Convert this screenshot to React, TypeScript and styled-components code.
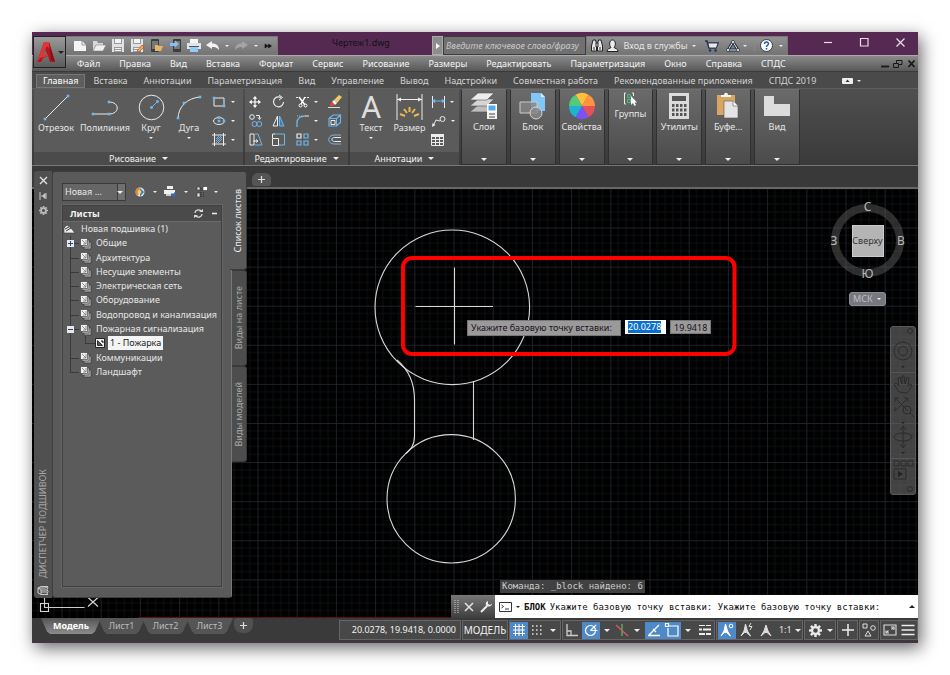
import React from 'react';
import styled, { createGlobalStyle, css } from 'styled-components';

const GlobalStyle = createGlobalStyle`
  * { box-sizing: border-box; }
  body {
    margin: 0;
    background: #fff;
    color: #e6e6e6;
    font-family: "Noto Sans", "Open Sans", sans-serif;
    font-size: 9px;
    line-height: 12px;
  }
  button, input, select {
    font: inherit;
    color: inherit;
    margin: 0;
    padding: 0;
    border: 0;
    background: none;
  }
`;

const Desktop = styled.div`
  min-height: 100vh;
  padding: 32px;
  display: flex;
`;

const Window = styled.main`
  flex: 1;
  min-width: 0;
  display: flex;
  flex-direction: column;
  background: #562953;
  box-shadow: 3px 5px 16px rgba(0, 0, 0, 0.6);
`;

/* ---------- shared parts ---------- */

const Icon = styled.svg<{ $w: number; $h: number }>`
  display: block;
  flex: none;
  width: ${(p) => p.$w}px;
  height: ${(p) => p.$h}px;
  overflow: visible;
  fill: none;
`;

const Caret = styled.span<{ $size?: number; $dark?: boolean; $up?: boolean }>`
  flex: none;
  width: 0;
  height: 0;
  border: ${(p) => p.$size ?? 2}px solid transparent;
  ${(p) =>
    p.$up
      ? css`
          border-top-width: 0;
          border-bottom-color: ${p.$dark ? '#222' : '#eee'};
        `
      : css`
          border-bottom-width: 0;
          border-top-color: ${p.$dark ? '#222' : '#eee'};
        `}
`;

const IconButton = styled.button<{ $w: number }>`
  flex: none;
  width: ${(p) => p.$w}px;
  height: 100%;
  display: flex;
  align-items: center;
  justify-content: center;
`;

/* ---------- title bar ---------- */

const Header = styled.header`
  position: relative;
`;

const TitleBar = styled.div`
  height: 23px;
  padding: 4px 0 0 34px;
  display: flex;
`;

const AppButton = styled.button`
  position: absolute;
  left: 1px;
  top: 4px;
  width: 33px;
  height: 32px;
  display: flex;
  align-items: center;
  justify-content: center;
  gap: 2px;
  border: 1px solid #222;
  background: linear-gradient(#9a9a9a, #5c5c5c);
  z-index: 1;
`;

const QuickBar = styled.div`
  width: 212px;
  padding-left: 4px;
  display: flex;
  border: 1px solid #777;
  border-left: 0;
  background: linear-gradient(#929292, #747474);
`;

const FileTitle = styled.h1`
  flex: 1;
  margin: 0;
  padding: 0 0 5px 12px;
  display: flex;
  align-items: center;
  justify-content: center;
  color: #111;
  font-size: 9px;
  font-weight: 400;
`;

const SearchToggle = styled.button`
  width: 11px;
  display: flex;
  align-items: center;
  justify-content: center;
  background: #8d8d8d;
  border: 1px solid #aaa;
`;

const SearchInput = styled.input`
  width: 143px;
  padding: 0 2px;
  border: 1px solid #3c3c3c;
  background: #707070;
  font-style: italic;
  &::placeholder { color: #c8c8c8; opacity: 1; }
`;

const InfoBar = styled.div`
  width: 202px;
  padding-left: 1px;
  display: flex;
  border: 1px solid #777;
  background: linear-gradient(#929292, #747474);
`;

const SignIn = styled.button`
  width: 90px;
  display: flex;
  align-items: center;
  justify-content: space-between;
  white-space: nowrap;
`;

const VRule = styled.span`
  width: 1px;
  margin: 3px 2px;
  background: #888;
`;

const WindowButtons = styled.div`
  width: 130px;
  height: 13px;
  padding-left: 22px;
  display: flex;
`;

const MenuBar = styled.nav`
  height: 17px;
  padding: 0 0 0 45px;
  display: flex;
  align-items: center;
  border-top: 1px solid #aaa;
  border-bottom: 1px solid #3a3a3a;
  background: linear-gradient(#8a8a8a, #585858);
`;

const MenuList = styled.div`
  flex: 1;
  display: flex;
  gap: 19px;
`;

const MenuItem = styled.button`
  color: #f4f4f4;
  white-space: nowrap;
`;

/* ---------- ribbon ---------- */

const RibbonTabs = styled.nav`
  height: 16px;
  padding: 2px 0 0 4px;
  display: flex;
  align-items: stretch;
  background: #4a4a4a;
`;

const RibbonTab = styled.button<{ $active?: boolean }>`
  padding: 0 8px;
  color: ${(p) => (p.$active ? '#fff' : '#d2d2d2')};
  white-space: nowrap;
  ${(p) =>
    p.$active &&
    css`
      background: #5e5e5e;
      box-shadow: inset 0 0 0 1px #777;
      padding: 0 7px;
    `}
`;

const RibbonToggle = styled.button`
  padding-left: 18px;
  display: flex;
  align-items: center;
  gap: 4px;
`;

const Ribbon = styled.section`
  height: 78px;
  display: flex;
  gap: 2px;
  padding: 0 2px;
  border-top: 1px solid #5f5f5f;
  border-bottom: 1px solid #777;
  background: linear-gradient(#4f4f4f, #3a3a3a);
`;

const Panel = styled.div<{ $w: number }>`
  width: ${(p) => p.$w}px;
  display: flex;
  flex-direction: column;
  background: #5b5b5b;
`;

const PanelBody = styled.div`
  flex: 1;
  display: flex;
`;

const PanelTitle = styled.button`
  height: 14px;
  display: flex;
  align-items: center;
  justify-content: center;
  gap: 6px;
  background: #4b4b4b;
  color: #f0f0f0;
`;

const BigTool = styled.button<{ $w: number }>`
  width: ${(p) => p.$w}px;
  padding-top: 4px;
  display: flex;
  flex-direction: column;
  align-items: center;
  white-space: nowrap;
`;

const BigIcon = styled.span`
  height: 29px;
  display: flex;
  align-items: center;
`;

const ToolLabel = styled.span`
  height: 15px;
`;

const ToolColumn = styled.div<{ $w: number }>`
  width: ${(p) => p.$w}px;
  padding: 3px 0;
  display: flex;
  flex-direction: column;
`;

const SmallTool = styled.button`
  height: 19px;
  display: flex;
  align-items: center;
  justify-content: center;
  gap: 5px;
`;

const DropPanels = styled.div`
  width: 339px;
  display: grid;
  grid-template-columns: repeat(7, 1fr);
  gap: 3px;
`;

const DropPanel = styled.button`
  padding: 3px 0 3px;
  display: flex;
  flex-direction: column;
  align-items: center;
  border: 1px solid #303030;
  border-top-color: #707070;
  background: linear-gradient(#6a6a6a, #4b4b4b);
  white-space: nowrap;
`;

const DropIcon = styled.span<{ $h: number }>`
  height: ${(p) => p.$h}px;
  display: flex;
  align-items: flex-start;
  justify-content: center;
`;

const DropLabel = styled.span`
  flex: 1;
`;

/* ---------- drawing area ---------- */

const Workspace = styled.section`
  position: relative;
  flex: 1;
  display: flex;
  flex-direction: column;
  background: #000;
`;

const FileTabs = styled.div`
  height: 23px;
  padding: 0 0 1px 220px;
  display: flex;
  align-items: flex-end;
  background: #393939;
  border-bottom: 2px solid #666;
`;

const AddFileTab = styled.button`
  width: 19px;
  height: 13px;
  display: flex;
  align-items: center;
  justify-content: center;
  border-radius: 6px 6px 3px 3px;
  background: #555;
`;

const Canvas = styled.div`
  position: relative;
  flex: 1;
  overflow: hidden;
  background: #000;
`;

const Drawing = styled.svg`
  position: absolute;
  inset: 0;
  width: 100%;
  height: 100%;
  fill: none;
`;

const Prompt = styled.div`
  position: absolute;
  left: 435px;
  top: 131px;
  display: flex;
  align-items: flex-start;
  gap: 4px;
  color: #1a1020;
`;

const PromptText = styled.label`
  width: 154px;
  height: 16px;
  padding: 1px 3px;
  background: #9a9a9a;
  border: 1px solid #777;
  line-height: 11px;
  white-space: nowrap;
`;

const CoordInput = styled.input`
  width: 41px;
  height: 14px;
  padding: 0 3px;
  background: #9a9a9a;
  border: 1px solid #777;
`;

const CoordBox = styled.span`
  width: 41px;
  height: 14px;
  padding: 0 3px;
  display: flex;
  align-items: center;
  background: #fff;
`;

const Selected = styled.span`
  background: #0b6fd0;
  color: #fff;
`;

const ViewCube = styled.div`
  position: absolute;
  right: 9px;
  top: 10px;
  width: 83px;
  height: 83px;
  display: grid;
  grid-template: 16px 1fr 16px / 16px 1fr 16px;
  place-items: center;
  color: #b8b8b8;
  font-size: 12px;
`;

const Ring = styled.span`
  position: absolute;
  inset: 5px;
  border: 8px solid rgba(100, 100, 100, 0.45);
  border-radius: 50%;
`;

const Side = styled.span<{ $area: string }>`
  position: relative;
  grid-area: ${(p) => p.$area};
`;

const CubeFace = styled.button`
  grid-area: 2 / 2;
  position: relative;
  width: 32px;
  height: 32px;
  display: flex;
  align-items: center;
  justify-content: center;
  background: #b4b4b4;
  border: 1px solid #ccc;
  color: #333;
  font-size: 9px;
`;

const UcsButton = styled.button`
  position: absolute;
  right: 32px;
  top: 103px;
  width: 37px;
  height: 14px;
  display: flex;
  align-items: center;
  justify-content: space-between;
  padding: 0 4px 0 3px;
  border: 1px solid #8d8d94;
  border-radius: 3px;
  background: #76777f;
  color: #c0c0c0;
`;

const NavBar = styled.div`
  position: absolute;
  right: 2px;
  top: 137px;
  width: 26px;
  height: 169px;
  border: 1px solid #5a5a5a;
  border-radius: 3px;
  background: rgba(110, 110, 110, 0.6);
`;

/* ---------- sheet set palette ---------- */

const Palette = styled.aside`
  position: absolute;
  left: 2px;
  top: 5px;
  bottom: 20px;
  display: flex;
  z-index: 2;
`;

const PaletteStrip = styled.div`
  width: 18px;
  padding: 2px 0 3px;
  display: flex;
  flex-direction: column;
  align-items: center;
  background: #505050;
  border-radius: 3px 0 0 3px;
`;

const StripButton = styled.button`
  width: 14px;
  height: 15px;
  display: flex;
  align-items: center;
  justify-content: center;
`;

const StripTitle = styled.span`
  margin: auto 0 8px;
  writing-mode: vertical-rl;
  transform: rotate(180deg);
  color: #a5a5a5;
  white-space: nowrap;
`;

const StripSpace = styled.span`
  flex: 1;
`;

const PaletteBody = styled.div`
  width: 180px;
  padding: 7px 9px 10px 9px;
  display: flex;
  flex-direction: column;
  gap: 3px;
  border: 1px solid #3e3e3e;
  border-right-color: #777;
  border-radius: 3px;
  background: #5a5a5a;
`;

const PaletteTools = styled.div`
  height: 23px;
  padding-top: 2px;
  display: flex;
  align-items: center;
`;

const SelectBox = styled.span`
  position: relative;
  width: 65px;
  height: 18px;
  margin-right: 5px;
  border: 1px solid #3b3b3b;
  background: linear-gradient(90deg, #666 54px, #3b3b3b 54px, #3b3b3b 55px, #707070 55px);
`;

const SetSelect = styled.select`
  appearance: none;
  width: 100%;
  height: 16px;
  padding: 0 12px 0 2px;
`;

const SelectCaret = styled.span`
  position: absolute;
  right: 2px;
  top: 7px;
  display: flex;
  pointer-events: none;
`;

const SheetsBox = styled.section`
  flex: 1;
  border: 1px solid #404040;
  box-shadow: 0 0 0 1px #666;
  background: #5b5b5b;
`;

const SheetsHeader = styled.div`
  height: 16px;
  padding: 0 4px 0 7px;
  display: flex;
  align-items: center;
  gap: 9px;
  background: #4a4a4a;
  border-bottom: 1px solid #6a6a6a;
`;

const SheetsTitle = styled.h2`
  flex: 1;
  margin: 0;
  font-size: 9px;
  font-weight: 700;
  color: #f2f2f2;
`;

const Tree = styled.ul`
  list-style: none;
  margin: 0;
  padding: 0;
  height: 157px;
  display: grid;
  grid-template-rows: repeat(11, 1fr);
`;

const TreeRow = styled.li<{ $level: number; $last?: boolean }>`
  position: relative;
  padding-left: ${(p) => [1, 17, 32][p.$level]}px;
  display: flex;
  align-items: center;
  gap: 5px;
  white-space: nowrap;
  ${(p) =>
    p.$level > 0 &&
    css`
      &::before {
        content: '';
        position: absolute;
        left: 7px;
        top: 0;
        bottom: ${p.$last ? '50%' : '0'};
        border-left: 1px solid #3a3a3a;
      }
      &::after {
        content: '';
        position: absolute;
        left: ${p.$level === 1 ? 7 : 22}px;
        top: ${p.$level === 1 ? '50%' : '0'};
        width: 9px;
        height: ${p.$level === 1 ? '0' : '50%'};
        border-bottom: 1px solid #3a3a3a;
        border-left: ${p.$level === 1 ? 0 : 1}px solid #3a3a3a;
      }
    `}
`;

const TreeLabel = styled.span<{ $selected?: boolean }>`
  ${(p) =>
    p.$selected &&
    css`
      margin-left: -2px;
      padding: 0 2px;
      background: #f4f4f4;
      color: #222;
      line-height: 14px;
    `}
`;

const Expander = styled.button`
  position: absolute;
  left: 4px;
  top: 4px;
  width: 7px;
  height: 7px;
  z-index: 1;
  display: flex;
  align-items: center;
  justify-content: center;
  background: #e8e8e8;
`;

const SideTabs = styled.div`
  width: 15px;
  height: 291px;
  display: flex;
  flex-direction: column;
`;

const SideTab = styled.button<{ $h: number; $active?: boolean }>`
  flex: none;
  height: ${(p) => p.$h}px;
  margin-left: ${(p) => (p.$active ? -2 : 0)}px;
  display: flex;
  align-items: center;
  justify-content: center;
  border: 1px solid #3a3a3a;
  border-left: 0;
  border-radius: 0 3px 3px 0;
  background: ${(p) => (p.$active ? '#5a5a5a' : '#4d4d4d')};
  color: ${(p) => (p.$active ? '#eee' : '#a8a8a8')};
`;

const Vertical = styled.span`
  writing-mode: vertical-rl;
  transform: rotate(180deg);
  white-space: nowrap;
`;

/* ---------- command line ---------- */

const CommandArea = styled.div`
  position: absolute;
  right: 0;
  bottom: 0;
  width: 467px;
`;

const History = styled.output`
  display: inline-block;
  margin: 0 0 2px 49px;
  height: 13px;
  padding: 0 2px;
  background: #414141;
  color: #ccc;
  font-family: "DejaVu Sans Mono", monospace;
  white-space: nowrap;
  vertical-align: bottom;
`;

const CommandLine = styled.div`
  height: 23px;
  display: flex;
  background: #fff;
`;

const CommandGrip = styled.div`
  width: 44px;
  display: flex;
  align-items: center;
  justify-content: space-around;
  background: linear-gradient(#777, #3e3e3e);
`;

const CommandPrompt = styled.label`
  flex: 1;
  display: flex;
  align-items: center;
  gap: 4px;
  padding: 0 3px 0 4px;
  color: #111;
  font-family: "DejaVu Sans Mono", monospace;
  white-space: nowrap;
`;

const CommandInput = styled.input`
  flex: 1;
  min-width: 0;
`;

/* ---------- status bar ---------- */

const StatusBar = styled.footer`
  height: 25px;
  display: flex;
  justify-content: space-between;
  background: #3a3a3a;
  border-bottom: 1px solid #562953;
`;

const LayoutTabs = styled.div`
  padding-left: 9px;
  display: flex;
`;

const LayoutTab = styled.button<{ $w: number; $active?: boolean }>`
  width: ${(p) => p.$w}px;
  height: 16px;
  margin-right: -3px;
  background: ${(p) => (p.$active ? 'linear-gradient(#555, #8c8c8c)' : '#555')};
  clip-path: polygon(0 0, 100% 0, calc(100% - 6px) 85%, calc(100% - 9px) 100%, 9px 100%, 6px 85%);
  color: ${(p) => (p.$active ? '#fff' : '#bbb')};
  font-weight: ${(p) => (p.$active ? 700 : 400)};
`;

const AddLayout = styled.button`
  width: 19px;
  height: 15px;
  margin-left: 4px;
  display: flex;
  align-items: center;
  justify-content: center;
  border-radius: 3px 3px 8px 8px;
  background: #505050;
`;

const StatusGroups = styled.div`
  padding: 2px 0 2px;
  display: flex;
  gap: 1px;
`;

const StatusGroup = styled.div<{ $w: number }>`
  width: ${(p) => p.$w}px;
  display: flex;
  align-items: center;
  justify-content: space-around;
  border: 1px solid #666;
  background: #484848;
  white-space: nowrap;
`;

const Coordinates = styled.button`
  flex: 1;
  padding-right: 4px;
  color: #f2f2f2;
  text-align: right;
`;

const SpaceButton = styled.button`
  color: #f2f2f2;
  font-size: 10px;
`;

const StatusButton = styled.button<{ $w?: number; $on?: boolean }>`
  width: ${(p) => p.$w ?? 18}px;
  height: 17px;
  display: flex;
  align-items: center;
  justify-content: center;
  background: ${(p) => (p.$on ? '#5089c8' : 'none')};
`;

/* ---------- icon drawings ---------- */

const W = '#ececec';
const B = '#6fb7ef';

type GlyphProps = { w: number; h: number; box?: string; children: React.ReactNode };
const Glyph = ({ w, h, box, children }: GlyphProps) => (
  <Icon $w={w} $h={h} viewBox={box ?? `0 0 ${w} ${h}`} aria-hidden="true">
    {children}
  </Icon>
);

const Dot = ({ x, y }: { x: number; y: number }) => <rect x={x - 1.3} y={y - 1.3} width="2.6" height="2.6" fill={B} />;

const LogoIcon = () => (
  <Glyph w={20} h={22}>
    <path d="M1 21 L8 1 L13 1 L19 21 L14 21 L12 15 L7 17 L5 21Z" fill="#b3161b" />
    <path d="M8 1 L13 1 L14 8 L11 5 L7 13 L11 12 L12 15 L4 17 L1 21Z" fill="#e0363a" />
    <path d="M9 8 L11 13 L7 13Z" fill="#6d6d6d" />
    <path d="M13 1 L19 21 L15 19Z" fill="#8c0f14" />
  </Glyph>
);
const NewIcon = () => (
  <Glyph w={14} h={12}>
    <path d="M1 1h8l4 4v6H1z" fill="#f4f4f4" />
    <path d="M9 1v4h4" stroke="#999" />
  </Glyph>
);
const OpenIcon = () => (
  <Glyph w={14} h={12}>
    <path d="M1 11V1h4l1 2h5v2H4z" fill="#d8d8d8" />
    <path d="M4 5h10l-3 6H1z" fill="#f0f0f0" stroke="#777" strokeWidth=".5" />
  </Glyph>
);
const SaveIcon = ({ pen }: { pen?: boolean }) => (
  <Glyph w={14} h={13}>
    <path d="M1 0h12v13H1z" fill="#e2e2e2" />
    <path d="M3 0h8v5H3zM3 8h8v5H3z" fill="#9a9a9a" />
    <path d="M4 0h6v4H4zM4 9h6v1H4zM4 11h6v1H4z" fill="#f2f2f2" />
    {pen && <path d="M7 12 L12 6 L14 8 L9 13z" fill="#f0b04a" stroke="#a33" strokeWidth=".6" />}
  </Glyph>
);
const DeviceIcon = ({ save }: { save?: boolean }) => (
  <Glyph w={14} h={13}>
    <rect x={save ? 5 : 2} y="0" width="8" height="13" rx="1" fill="#3d3d3d" />
    <rect x={save ? 6 : 3} y="2" width="6" height="8" fill="#777" />
    {save ? <path d="M2 4h5V1.500l4 3.500-4 3.500V7H2z" fill="#7fc4f5" /> : <path d="M6 12V6h3l1 1h4l-2 5z" fill="#e6b566" />}
  </Glyph>
);
const PrintIcon = () => (
  <Glyph w={14} h={13}>
    <path d="M3 0h8v4H3z" fill="#f4f4f4" />
    <path d="M0 4h14v6H0z" fill="#e4e4e4" />
    <path d="M2 7h10v1H2z" fill="#555" />
    <path d="M3 8h8v5H3z" fill="#8ecdf7" />
  </Glyph>
);
const UndoIcon = ({ flip }: { flip?: boolean }) => (
  <Glyph w={13} h={9}>
    <path
      transform={flip ? 'translate(13 0) scale(-1 1)' : undefined}
      d="M0 4 L6 0 V2.500 C10 2.500 13 4 13 9 C11 6.500 9 6 6 6 V8z"
      fill={flip ? '#a4a4a4' : '#f2f2f2'}
    />
  </Glyph>
);
const MoreIcon = () => (
  <Glyph w={7} h={6}>
    <path d="M0 1l3 2-3 2zM3.500 1l3 2-3 2z" fill="#111" stroke="#111" strokeWidth=".6" />
  </Glyph>
);
const BinocularsIcon = () => (
  <Glyph w={14} h={13}>
    <g fill="#e8e8e8" stroke="#222">
      <path d="M3 1h2.500l1 4v7h-5V7zM11 1H8.500l-1 4v7h5V7z" />
      <path d="M6 4h2v4H6z" />
    </g>
    <path d="M4 8v3M10 8v3" stroke="#333" />
  </Glyph>
);
const UserIcon = () => (
  <Glyph w={13} h={13}>
    <path d="M1 12.500c0-3 3-3 4-4-2-2-2-7.500 1.500-7.500S10 6.500 8 8.500c1 1 4 1 4 4z" fill="#eee" stroke="#222" />
  </Glyph>
);
const CartIcon = () => (
  <Glyph w={14} h={12}>
    <path d="M0 1h2l2 7h7l2-5H3" stroke="#223355" strokeWidth="1.600" />
    <path d="M3.500 3.500h9l-1.500 4H4.500z" fill="#e8e8e8" />
    <circle cx="5" cy="10.500" r="1.300" fill="#223355" />
    <circle cx="10.500" cy="10.500" r="1.300" fill="#223355" />
  </Glyph>
);
const ExchangeIcon = () => (
  <Glyph w={14} h={12}>
    <path d="M7 2 L12 10 H2z" stroke="#243048" strokeWidth="3" strokeLinejoin="round" />
    <path d="M7 2 L12 10 H2z" stroke="#e4e4e4" strokeLinejoin="round" />
    <circle cx="7" cy="2" r="1.600" fill="#e4e4e4" stroke="#243048" strokeWidth=".7" />
    <circle cx="2" cy="10" r="1.600" fill="#e4e4e4" stroke="#243048" strokeWidth=".7" />
    <circle cx="12" cy="10" r="1.600" fill="#e4e4e4" stroke="#243048" strokeWidth=".7" />
  </Glyph>
);
const HelpIcon = () => (
  <Glyph w={13} h={13}>
    <circle cx="6.500" cy="6.500" r="6" fill="#fafafa" stroke="#222" strokeWidth=".8" />
    <path d="M4.500 5c0-3 4.200-2.600 4 0-.2 1.300-2 1.300-2 3M6.500 9v1.500" stroke="#1d5fa8" strokeWidth="1.500" />
  </Glyph>
);
const WinIcon = ({ kind }: { kind: 'min' | 'max' | 'close' }) => (
  <Glyph w={9} h={9}>
    <path
      d={{ min: 'M0 4.500h8', max: 'M.5 .5h7.500v7.500H.5z', close: 'M.5 .5l8 8M8.500 .5l-8 8' }[kind]}
      stroke="#e8dce8"
      strokeWidth="1.200"
    />
  </Glyph>
);
const DocIcon = ({ kind }: { kind: 'min' | 'restore' | 'close' }) => (
  <Glyph w={9} h={8}>
    <path
      d={{ min: 'M1 6.500h8', restore: 'M.5 3.500h5v4h-5zM3.500 3v-2.500h5.500v4h-3', close: 'M1.500 .5l6 6.500M7.500 .5l-6 6.500' }[kind]}
      stroke="#181818"
      strokeWidth={kind === 'restore' ? 1 : 1.8}
    />
  </Glyph>
);
const RibbonToggleIcon = () => (
  <Glyph w={11} h={6}>
    <rect width="11" height="6" rx="1" fill="#eee" />
    <path d="M3.500 4l2-2.500 2 2.500z" fill="#333" />
  </Glyph>
);

const LineIcon = () => (
  <Glyph w={27} h={27}>
    <path d="M2 25L25 2" stroke={W} />
    <Dot x={2} y={25} />
    <Dot x={25} y={2} />
  </Glyph>
);
const PolylineIcon = () => (
  <Glyph w={26} h={27}>
    <path d="M1 20H17c11 0 11-12 0-12" stroke={W} />
    <Dot x={1} y={20} />
    <Dot x={17} y={20} />
    <Dot x={17} y={8} />
  </Glyph>
);
const CircleIcon = () => (
  <Glyph w={27} h={27}>
    <circle cx="13.500" cy="13.500" r="12.300" stroke={W} />
    <path d="M13.500 13.500l6-6" stroke={B} />
    <Dot x={13.5} y={13.5} />
    <Dot x={19.5} y={7.5} />
  </Glyph>
);
const ArcIcon = () => (
  <Glyph w={26} h={27}>
    <path d="M2 25C2 12 12 4 24 3" stroke={W} />
    <Dot x={2} y={24} />
    <Dot x={8} y={9} />
    <Dot x={24} y={3} />
  </Glyph>
);
const RectIcon = () => (
  <Glyph w={14} h={12}>
    <path d="M2 2h10v8H2z" stroke={W} />
    <Dot x={2} y={2} />
    <Dot x={12} y={10} />
  </Glyph>
);
const EllipseIcon = () => (
  <Glyph w={14} h={12}>
    <ellipse cx="7" cy="6" rx="5.500" ry="3.500" stroke={W} />
    <Dot x={7} y={6} />
    <Dot x={7} y={2.5} />
    <Dot x={12} y={6} />
  </Glyph>
);
const HatchIcon = () => (
  <Glyph w={14} h={13}>
    <path d="M2.500 0v13M11.500 0v13M0 2h14M0 11h14" stroke={W} />
    <path d="M4 6l3-3M4 8l5-5M4 10l6-6M6 10l4-4" stroke={B} />
  </Glyph>
);
const MoveIcon = () => (
  <Glyph w={12} h={12}>
    <path d="M6 1v10M1 6h10" stroke="#fff" strokeWidth="1.200" />
    <path d="M6 0l2.200 2.800H3.800zM6 12l2.200-2.800H3.800zM0 6l2.800-2.200v4.400zM12 6L9.200 3.800v4.400z" fill="#fff" />
  </Glyph>
);
const CopyIcon = () => (
  <Glyph w={13} h={13}>
    <circle cx="3" cy="3" r="2.300" stroke={W} />
    <path d="M7 1.500h3.500v3M9 3.500l1.500 2 1.500-2" stroke={W} />
    <circle cx="5.500" cy="10" r="2.500" stroke={B} />
    <circle cx="10.200" cy="10" r="2.500" stroke={B} />
  </Glyph>
);
const StretchIcon = () => (
  <Glyph w={13} h={13}>
    <path d="M1 1h4v11H1z" stroke={W} />
    <path d="M6 1h3l4 11H6" stroke={B} />
    <path d="M4 8h4M7 6.500l2 1.500-2 1.500" stroke={W} />
  </Glyph>
);
const RotateIcon = () => (
  <Glyph w={13} h={13}>
    <path d="M9 2.500A5 5 0 1 0 11.500 7" stroke={W} strokeWidth="1.200" />
    <path d="M7 0l3.500 2.500L7 5" stroke={W} />
  </Glyph>
);
const MirrorIcon = () => (
  <Glyph w={13} h={12}>
    <path d="M5.500 1v10H1z" stroke={W} />
    <path d="M7.500 1v10H12z" fill="#3a7db5" stroke={B} />
  </Glyph>
);
const ScaleIcon = () => (
  <Glyph w={13} h={13}>
    <path d="M3 1h9.500v11H7" stroke={B} />
    <path d="M.5 5.500h6v7h-6zM.5 5V1H3" stroke={W} />
  </Glyph>
);
const TrimIcon = () => (
  <Glyph w={13} h={12}>
    <path d="M0 1.500h4M8 1.500h5" stroke={W} strokeDasharray="2 1" />
    <path d="M3 1l6 8M9 1L5 8" stroke="#fff" strokeWidth="1.500" />
    <circle cx="4.500" cy="9.500" r="1.500" stroke="#fff" />
    <circle cx="9.500" cy="9.500" r="1.500" stroke="#fff" />
  </Glyph>
);
const FilletIcon = () => (
  <Glyph w={13} h={12}>
    <path d="M1 12V8C1 3 5 1 9 1" stroke={B} strokeWidth="1.300" />
    <path d="M9 1h4" stroke={W} />
    <path d="M1 1h5" stroke="#bbb" strokeDasharray="1 1" />
  </Glyph>
);
const ArrayIcon = () => (
  <Glyph w={13} h={13}>
    <path d="M1 1h4v4H1z" stroke={W} strokeWidth="1.200" />
    <path d="M8 1h4v4H8zM1 8h4v4H1zM8 8h4v4H8z" stroke={B} strokeWidth="1.200" />
  </Glyph>
);
const EraseIcon = () => (
  <Glyph w={14} h={13}>
    <path d="M6 5L11 0l3 2-5 6z" fill="#f6c66b" />
    <path d="M6 5l3 3-2 2-3-3z" fill="#fff" />
    <path d="M4 7l3 3-2 1H2V9z" fill="#e2453c" />
    <path d="M0 12.500h12" stroke="#ddd" />
  </Glyph>
);
const ExplodeIcon = () => (
  <Glyph w={13} h={13}>
    <path d="M1 4.500h7.500v7.500H1zM8.500 12l4-3.500V1l-4 3.500M1 4.500L5 1h7.500" stroke={B} strokeWidth="1.100" />
    <path d="M3 6.500h4v4H3z" stroke={W} />
  </Glyph>
);
const OffsetIcon = () => (
  <Glyph w={13} h={11}>
    <path d="M13 1H6C-1 1-1 10 6 10h7" stroke={B} />
    <path d="M13 3.500H6.500c-3.500 0-3.500 4 0 4H13" stroke={W} />
  </Glyph>
);
const TextIconLetter = styled.span`
  font-family: Roboto, sans-serif;
  font-size: 31px;
  line-height: 29px;
  color: #dedede;
`;
const DimensionIcon = () => (
  <Glyph w={27} h={27}>
    <path d="M1 0v26M26 0v26M1 5.500h25" stroke={W} />
    <path d="M1 5.500l4-2v4zM26 5.500l-4-2v4z" fill={W} />
    <path d="M13.500 13v5M8 15l3 4M19 15l-3 4M4 20l5 2M23 20l-5 2" stroke="#f1b64d" strokeWidth="2" />
  </Glyph>
);
const LinearDimIcon = () => (
  <Glyph w={13} h={12}>
    <path d="M.5 0v12M12.500 0v12" stroke={W} />
    <path d="M1 5h11M3 3.500L1 5l2 1.500M10 3.500L12 5l-2 1.500" stroke={B} strokeWidth="1.200" />
  </Glyph>
);
const LeaderIcon = () => (
  <Glyph w={14} h={12}>
    <path d="M1 11L4 5l4 1" stroke={W} />
    <path d="M0 12l.5-4 3 2z" fill={W} />
    <circle cx="10.500" cy="4" r="2.500" stroke={W} />
  </Glyph>
);
const TableIcon = () => (
  <Glyph w={14} h={12}>
    <path d="M.5.5h12v11H.5zM.5 5.500h12M.5 8.500h12M4.500 3v9M8.500 3v9" stroke={W} />
    <path d="M0 0h13v3H0z" fill={W} />
  </Glyph>
);

const LayersIcon = () => (
  <Glyph w={28} h={27}>
    <g stroke="#555" strokeWidth=".6">
      <path d="M0 19l8-7h16l-7 7z" fill="#bdbdbd" />
      <path d="M0 13l8-7h16l-7 7z" fill="#d5d5d5" />
      <path d="M0 7l8-7h16l-7 7z" fill="#ececec" />
    </g>
    <path d="M17 11h10v8H17z" fill="#fff" />
    <path d="M18.500 12.500h7v5h-7z" fill="#59a9e8" />
    <path d="M17 19h10v7H17z" fill="#f3f3f3" />
    <path d="M19 21h6M19 24h6" stroke="#444" />
  </Glyph>
);
const BlockIcon = () => (
  <Glyph w={27} h={27}>
    <path d="M12 0h10l4 4v14H12z" fill="#82c6f5" />
    <path d="M22 0v4h4" fill="#d6edff" />
    <path d="M1 9h17v11H1z" fill="#858585" fillOpacity=".8" stroke="#ccc" />
    <circle cx="17" cy="20" r="6" fill="#888" fillOpacity=".8" stroke="#d4d4d4" />
  </Glyph>
);
const WheelIcon = () => (
  <Glyph w={26} h={26} box="-13 -13 26 26">
    {['#ffbf3d', '#ff9440', '#e65159', '#7a52f5', '#1fb3d3', '#52cb7c'].map((c, i) => (
      <path key={c} d="M0 0V-13A13 13 0 0 1 11.260-6.500z" fill={c} transform={`rotate(${i * 60 - 30})`} />
    ))}
  </Glyph>
);
const GroupIcon = () => (
  <Glyph w={13} h={13}>
    <path d="M2 0H.5v11H2M8 0h1.500v3" stroke={W} />
    <circle cx="5" cy="3" r="1.700" stroke="#3dd07c" />
    <path d="M3.500 6.500h3v3h-3z" stroke="#3dd07c" />
    <path d="M7 3v9l2-2 1.500 3 1.500-1-1.500-2.500H13z" fill="#fff" />
  </Glyph>
);
const CalcIcon = () => (
  <Glyph w={20} h={26}>
    <rect width="20" height="26" fill="#dcdcdc" />
    <path d="M3 3h14v5H3z" fill="#555" />
    {[11, 15.5, 20].map((y) => [3, 7, 11, 15].map((x) => <rect key={`${x}-${y}`} x={x} y={y} width="2.500" height="3" fill="#555" />))}
  </Glyph>
);
const PasteIcon = () => (
  <Glyph w={22} h={26}>
    <path d="M0 2h18v20H0z" fill="#d9a662" />
    <path d="M4 4V2h3c0-3 4-3 4 0h3v2z" fill="#f5f5f5" />
    <path d="M7 8h9l5 5v12H7z" fill="#e4e4e4" stroke="#555" strokeWidth=".6" />
    <path d="M16 8v5h5" fill="#fff" stroke="#555" strokeWidth=".6" />
  </Glyph>
);
const ViewIcon = () => (
  <Glyph w={26} h={26}>
    <path d="M0 3h10v8h16v12H0z" fill="#dcdcdc" />
  </Glyph>
);

const PlusIcon = ({ size = 7 }: { size?: number }) => (
  <Glyph w={size} h={size} box="0 0 8 8">
    <path d="M4 0v8M0 4h8" stroke="#ddd" strokeWidth="1.400" />
  </Glyph>
);
const CloseIcon = ({ size = 7 }: { size?: number }) => (
  <Glyph w={size} h={size} box="0 0 8 8">
    <path d="M0 0l8 8M8 0L0 8" stroke="#e0e0e0" strokeWidth="1.600" />
  </Glyph>
);
const PinIcon = () => (
  <Glyph w={8} h={8}>
    <path d="M1 0v8M7 1v6" stroke="#ccc" />
    <path d="M2 4h2M6 1.500L3.500 4 6 6.500z" stroke="#ccc" strokeWidth=".8" fill="#ccc" />
  </Glyph>
);
const GearIcon = ({ size, color = '#ececec' }: { size: number; color?: string }) => (
  <Glyph w={size} h={size} box="-7 -7 14 14">
    {[0, 45, 90, 135, 180, 225, 270, 315].map((a) => (
      <path key={a} d="M-1.300-7h2.600v3h-2.600z" fill={color} transform={`rotate(${a})`} />
    ))}
    <circle r="3.700" stroke={color} strokeWidth="2.400" />
  </Glyph>
);
const BookIcon = () => (
  <Glyph w={12} h={9}>
    <path d="M1 2l3-1.500h7L8 2zM1 2v5l3 1.500h7M4 4v4.500M11 1l-1 2.500 1 2-1 2.500M4 4h6M1 2l3 2M4 6h6" stroke="#ccc" />
  </Glyph>
);
const EtransmitIcon = () => (
  <Glyph w={10} h={10}>
    <circle cx="5" cy="5" r="4.500" fill="#d8e8f4" />
    <path d="M5 .5A4.500 4.500 0 0 0 3 9z" fill="#e2833a" />
    <path d="M5 1l4 4-4 4.500z" fill="#2878c8" />
    <circle cx="4.500" cy="5" r="2" fill="#f5d04f" />
  </Glyph>
);
const PublishIcon = () => (
  <Glyph w={13} h={12}>
    <path d="M3 0h6v3H3zM0 4h11v4H0z" fill="#f0f0f0" />
    <path d="M2 8h7v2H2z" fill="#ccc" />
    <path d="M7 7.500h3V6L13 8.700l-3 2.800V10H7z" fill="#3a68b0" />
  </Glyph>
);
const SelectionsIcon = () => (
  <Glyph w={12} h={12}>
    <path d="M1 1h3v3H1zM1 7h3v4H1z" fill="#ddd" stroke="#333" strokeWidth=".6" />
    <path d="M7 .5h4.500v4H7z" fill="#fff" stroke="#333" strokeWidth=".6" />
    <path d="M5 2v9M7 7h2M7 10h2" stroke="#222" strokeDasharray="1 1" />
  </Glyph>
);
const RefreshIcon = () => (
  <Glyph w={9} h={9}>
    <path d="M1 4c0-3 4-4 6-2M8 5c0 3-4 4-6 2" stroke="#ddd" strokeWidth="1.300" />
    <path d="M5 3h4V0zM4 6H0v3z" fill="#ddd" />
  </Glyph>
);
const SetIcon = () => (
  <Glyph w={12} h={9}>
    <path d="M0 8h11L7 3 3 0 0 3z" fill="#eee" stroke="#333" strokeWidth=".6" />
    <path d="M2 6l5-3M1 4l4-2" stroke="#333" />
  </Glyph>
);
const SubsetIcon = () => (
  <Glyph w={11} h={11}>
    <path d="M4 4h7v7H4z" fill="#aaa" stroke="#333" strokeWidth=".6" />
    <path d="M2 2h7v7H2z" fill="#ccc" stroke="#333" strokeWidth=".6" />
    <path d="M.5.5h7v7h-7z" fill="#f0f0f0" stroke="#333" strokeWidth=".6" />
    <path d="M2 2l4 4M6 2v4H3" stroke="#777" strokeWidth=".8" />
  </Glyph>
);
const SheetIcon = () => (
  <Glyph w={10} h={10}>
    <path d="M.5.5h9v9h-9z" fill="#f0f0f0" stroke="#222" />
    <path d="M2.500 2.500l5 5H2.500zM6 3h2v2" stroke="#333" fill="#555" />
  </Glyph>
);
const WrenchIcon = () => (
  <Glyph w={12} h={12}>
    <path d="M1 11l6-6" stroke="#eee" strokeWidth="2" />
    <path d="M8 0C5 1 5 5 8 5.500c2 .4 4-1 4-3L10 4 8 3z" fill="#eee" />
  </Glyph>
);
const GripIcon = () => (
  <Glyph w={5} h={14}>
    <path d="M1 0v14M4 0v14" stroke="#ccc" strokeDasharray="1 1" />
  </Glyph>
);
const ConsoleIcon = () => (
  <Glyph w={13} h={10}>
    <path d="M.5.5h12v9H.5z" stroke="#333" />
    <path d="M2.500 3l2 1.500-2 1.500M6 7h4" stroke="#333" />
  </Glyph>
);
const NavDrawing = () => (
  <Glyph w={24} h={167}>
    <g stroke="#2b2b2b" strokeWidth="1">
      <circle cx="19" cy="4" r="2.500" />
      <circle cx="12" cy="24" r="9" />
      <circle cx="12" cy="24" r="4.500" />
      <path d="M0 45.500h24M0 131.500h24" stroke="#555" />
      <path d="M8 65L3 57l2-1 3 3-1-8 2-1 2 7V49h2l1 8 2-7 2 1-1 8 3-2 1 2-5 7z" />
      <path d="M4 71l13 13M17 71L4 84M4 71h4M4 71v4M17 71h-4M17 71v4M4 84v-4" />
      <circle cx="16" cy="83" r="4" />
      <path d="M19 86l4 4M12 100v20M9 103l3-4 3 4M9 117l3 4 3-4" />
      <ellipse cx="12" cy="110" rx="9" ry="4" />
      <path d="M3 134h5v5H3zM10 134h5v5h-5zM17 134h5v5h-5zM3 142h12v10H3z" />
      <circle cx="19" cy="162" r="2.500" />
    </g>
    <path d="M10 39h4l-2 2zM10 95h4l-2 2zM10 125h4l-2 2zM7 144v6l5-3z" fill="#222" />
  </Glyph>
);

const StatusIcon = ({ kind }: { kind: string }) => {
  const drawings: Record<string, React.ReactNode> = {
    grid: <path d="M3.500 1v12M7 1v12M10.500 1v12M1 3.500h12M1 7h12M1 10.500h12" stroke="#fff" />,
    snap: <path d="M2 3h12M2 7h12M2 11h12" stroke="#ddd" strokeWidth="1.600" strokeDasharray="1.600 2.400" />,
    ortho: <path d="M2 1v11.500h11M2 8h4v4" stroke="#ccc" strokeWidth="1.300" />,
    polar: (
      <g stroke="#fff" strokeWidth="1.200">
        <circle cx="6.500" cy="7.500" r="5" />
        <path d="M6.500 7.500h7M6.500 7.500L12 2" />
      </g>
    ),
    iso: (
      <g strokeWidth="1.400">
        <path d="M7 1v12" stroke="#45b86a" />
        <path d="M1 2l12 11" stroke="#d65a5a" />
      </g>
    ),
    track: (
      <g stroke="#fff" strokeWidth="1.300">
        <path d="M1 12.500h12M2 12L12 2" />
        <path d="M6 6l3 3" />
      </g>
    ),
    osnap: (
      <g stroke="#fff" strokeWidth="1.200">
        <path d="M4 3h9v10H3V5" />
        <path d="M.5.5h3v3h-3z" />
      </g>
    ),
    weight: (
      <g stroke="#eee">
        <path d="M1 2.500h6M8 2.500h5" />
        <path d="M1 6.500h3M5 6.500h8" strokeWidth="2" />
        <path d="M1 11h6M8 11h5" strokeWidth="2" />
      </g>
    ),
    plus: <path d="M7 1v12M1 7h12" stroke="#eee" strokeWidth="1.500" />,
    isolate: (
      <g stroke="#ddd">
        <path d="M1 1h4v4H1zM6 8l3 5H3z" />
        <circle cx="11" cy="5" r="2.300" />
      </g>
    ),
    full: (
      <g stroke="#ddd" strokeWidth="1.100">
        <path d="M1 2h12v10H1z" />
        <path d="M3 7.500V10h3M8 4h3v3" />
        <path d="M3.500 9.500l2-2M10.500 4.500l-2 2" />
      </g>
    ),
    menu: <path d="M.5 2.500h13M.5 7h13M.5 11.500h13" stroke="#eee" strokeWidth="1.500" />,
    annoOn: (
      <g>
        <path d="M5.500 1l2 7 3 5-4-3.500h-2L1 13l3-5z" fill="#fff" stroke="#fff" />
        <circle cx="11" cy="3" r="1.800" stroke="#fff" />
      </g>
    ),
    annoAuto: (
      <g>
        <path d="M5.500 1l2 7 3 5-4-3.500h-2L1 13l3-5z" fill="#ddd" stroke="#ddd" />
        <path d="M11 0L9 3.500h3L10 7" stroke="#ddd" />
      </g>
    ),
    anno: <path d="M7 2l2 6 3 5-4-3.500H6L2 13l3-5z" fill="#ddd" stroke="#ddd" />,
  };
  return (
    <Glyph w={14} h={14}>
      {drawings[kind]}
    </Glyph>
  );
};

/* ---------- data ---------- */

const menus = ['Файл', 'Правка', 'Вид', 'Вставка', 'Формат', 'Сервис', 'Рисование', 'Размеры', 'Редактировать', 'Параметризация', 'Окно', 'Справка', 'СПДС'];
const ribbonTabs = ['Главная', 'Вставка', 'Аннотации', 'Параметризация', 'Вид', 'Управление', 'Вывод', 'Надстройки', 'Совместная работа', 'Рекомендованные приложения', 'СПДС 2019'];

const quickTools: [string, React.ReactNode][] = [
  ['Создать', <NewIcon />],
  ['Открыть', <OpenIcon />],
  ['Сохранить', <SaveIcon />],
  ['Сохранить как', <SaveIcon pen />],
  ['Открыть с устройства', <DeviceIcon />],
  ['Сохранить на устройство', <DeviceIcon save />],
  ['Печать', <PrintIcon />],
  ['Отменить', <UndoIcon />],
];

const drawTools = [
  { label: 'Отрезок', w: 44, icon: <LineIcon /> },
  { label: 'Полилиния', w: 54, icon: <PolylineIcon /> },
  { label: 'Круг', w: 38, icon: <CircleIcon />, drop: true },
  { label: 'Дуга', w: 38, icon: <ArcIcon />, drop: true },
];

type Small = { name: string; icon: React.ReactNode; drop?: boolean };
const drawSmall: Small[] = [
  { name: 'Прямоугольник', icon: <RectIcon />, drop: true },
  { name: 'Эллипс', icon: <EllipseIcon />, drop: true },
  { name: 'Штриховка', icon: <HatchIcon />, drop: true },
];
const editColumns: { w: number; tools: Small[] }[] = [
  { w: 20, tools: [{ name: 'Перенести', icon: <MoveIcon /> }, { name: 'Копировать', icon: <CopyIcon /> }, { name: 'Растянуть', icon: <StretchIcon /> }] },
  { w: 26, tools: [{ name: 'Повернуть', icon: <RotateIcon /> }, { name: 'Зеркало', icon: <MirrorIcon /> }, { name: 'Масштаб', icon: <ScaleIcon /> }] },
  { w: 31, tools: [{ name: 'Обрезать', icon: <TrimIcon />, drop: true }, { name: 'Сопряжение', icon: <FilletIcon />, drop: true }, { name: 'Массив', icon: <ArrayIcon />, drop: true }] },
  { w: 25, tools: [{ name: 'Стереть', icon: <EraseIcon /> }, { name: 'Расчленить', icon: <ExplodeIcon /> }, { name: 'Подобие', icon: <OffsetIcon /> }] },
];
const noteSmall: Small[] = [
  { name: 'Линейный', icon: <LinearDimIcon />, drop: true },
  { name: 'Выноска', icon: <LeaderIcon />, drop: true },
];

const dropPanels = [
  { label: 'Слои', icon: <LayersIcon />, h: 28 },
  { label: 'Блок', icon: <BlockIcon />, h: 28 },
  { label: 'Свойства', icon: <WheelIcon />, h: 28 },
  { label: 'Группы', icon: <GroupIcon />, h: 15 },
  { label: 'Утилиты', icon: <CalcIcon />, h: 28 },
  { label: 'Буфе...', icon: <PasteIcon />, h: 28 },
  { label: 'Вид', icon: <ViewIcon />, h: 28 },
];

const tree = [
  { label: 'Новая подшивка (1)', level: 0 },
  { label: 'Общие', level: 1, toggle: '+' },
  { label: 'Архитектура', level: 1 },
  { label: 'Несущие элементы', level: 1 },
  { label: 'Электрическая сеть', level: 1 },
  { label: 'Оборудование', level: 1 },
  { label: 'Водопровод и канализация', level: 1 },
  { label: 'Пожарная сигнализация', level: 1, toggle: '-' },
  { label: '1 - Пожарка', level: 2, selected: true },
  { label: 'Коммуникации', level: 1 },
  { label: 'Ландшафт', level: 1, last: true },
];

/* ---------- composition ---------- */

const TableTool = styled(SmallTool)`
  justify-content: flex-start;
  padding-left: 4px;
`;

const SmallColumn = ({ w, tools, children }: { w: number; tools: Small[]; children?: React.ReactNode }) => (
  <ToolColumn $w={w}>
    {tools.map((t) => (
      <SmallTool key={t.name} aria-label={t.name}>
        {t.icon}
        {t.drop && <Caret />}
      </SmallTool>
    ))}
    {children}
  </ToolColumn>
);

const TitleArea = () => (
  <Header>
    <AppButton aria-label="Меню приложения">
      <LogoIcon />
      <Caret $dark $size={3} />
    </AppButton>
    <TitleBar>
      <QuickBar>
        {quickTools.map(([name, icon]) => (
          <IconButton key={name} $w={19} aria-label={name}>{icon}</IconButton>
        ))}
        <IconButton $w={10} aria-label="Список отмены"><Caret /></IconButton>
        <IconButton $w={19} aria-label="Повторить"><UndoIcon flip /></IconButton>
        <IconButton $w={10} aria-label="Список повтора"><Caret /></IconButton>
        <IconButton $w={14} aria-label="Ещё"><MoreIcon /></IconButton>
      </QuickBar>
      <FileTitle>Чертеж1.dwg</FileTitle>
      <SearchToggle aria-label="Свернуть поиск">
        <Glyph w={4} h={6}><path d="M0 0l4 3-4 3z" fill="#fff" /></Glyph>
      </SearchToggle>
      <SearchInput aria-label="Поиск" placeholder="Введите ключевое слово/фразу" />
      <InfoBar>
        <IconButton $w={18} aria-label="Найти"><BinocularsIcon /></IconButton>
        <SignIn>
          <UserIcon />
          Вход в службы
          <Caret />
        </SignIn>
        <IconButton $w={32} aria-label="Магазин"><CartIcon /></IconButton>
        <IconButton $w={10} aria-label="Приложения"><ExchangeIcon /></IconButton>
        <IconButton $w={14} aria-label="Список приложений"><Caret /></IconButton>
        <VRule />
        <IconButton $w={19} aria-label="Справка"><HelpIcon /></IconButton>
        <IconButton $w={10} aria-label="Список справки"><Caret /></IconButton>
      </InfoBar>
      <WindowButtons>
        <IconButton $w={36} aria-label="Свернуть"><WinIcon kind="min" /></IconButton>
        <IconButton $w={36} aria-label="Развернуть"><WinIcon kind="max" /></IconButton>
        <IconButton $w={36} aria-label="Закрыть"><WinIcon kind="close" /></IconButton>
      </WindowButtons>
    </TitleBar>
    <MenuBar>
      <MenuList>
        {menus.map((m) => <MenuItem key={m}>{m}</MenuItem>)}
      </MenuList>
      <IconButton $w={13} aria-label="Свернуть чертеж"><DocIcon kind="min" /></IconButton>
      <IconButton $w={13} aria-label="Восстановить чертеж"><DocIcon kind="restore" /></IconButton>
      <IconButton $w={14} aria-label="Закрыть чертеж"><DocIcon kind="close" /></IconButton>
    </MenuBar>
  </Header>
);

const RibbonArea = () => (
  <>
    <RibbonTabs>
      {ribbonTabs.map((t, i) => <RibbonTab key={t} $active={i === 0}>{t}</RibbonTab>)}
      <RibbonToggle aria-label="Вид ленты">
        <RibbonToggleIcon />
        <Caret />
      </RibbonToggle>
    </RibbonTabs>
    <Ribbon>
      <Panel $w={209}>
        <PanelBody>
          {drawTools.map((t) => (
            <BigTool key={t.label} $w={t.w}>
              <BigIcon>{t.icon}</BigIcon>
              <ToolLabel>{t.label}</ToolLabel>
              {t.drop && <Caret />}
            </BigTool>
          ))}
          <SmallColumn w={30} tools={drawSmall} />
        </PanelBody>
        <PanelTitle>Рисование <Caret $size={3} /></PanelTitle>
      </Panel>
      <Panel $w={103}>
        <PanelBody>
          {editColumns.map((c) => <SmallColumn key={c.tools[0].name} w={c.w} tools={c.tools} />)}
        </PanelBody>
        <PanelTitle>Редактирование <Caret $size={3} /></PanelTitle>
      </Panel>
      <Panel $w={109}>
        <PanelBody>
          <BigTool $w={42}>
            <BigIcon><TextIconLetter aria-hidden="true">A</TextIconLetter></BigIcon>
            <ToolLabel>Текст</ToolLabel>
            <Caret />
          </BigTool>
          <BigTool $w={35}>
            <BigIcon><DimensionIcon /></BigIcon>
            <ToolLabel>Размер</ToolLabel>
          </BigTool>
          <SmallColumn w={32} tools={noteSmall}>
            <TableTool aria-label="Таблица"><TableIcon /></TableTool>
          </SmallColumn>
        </PanelBody>
        <PanelTitle>Аннотации <Caret $size={3} /></PanelTitle>
      </Panel>
      <DropPanels>
        {dropPanels.map((p) => (
          <DropPanel key={p.label}>
            <DropIcon $h={p.h}>{p.icon}</DropIcon>
            <DropLabel>{p.label}</DropLabel>
            <Caret $size={3} />
          </DropPanel>
        ))}
      </DropPanels>
    </Ribbon>
  </>
);

const SheetPalette = () => (
  <Palette>
    <PaletteStrip>
      <StripButton aria-label="Закрыть палитру"><CloseIcon /></StripButton>
      <StripButton aria-label="Автоскрытие"><PinIcon /></StripButton>
      <StripButton aria-label="Свойства палитры"><GearIcon size={9} color="#bbb" /></StripButton>
      <StripSpace />
      <StripTitle>ДИСПЕТЧЕР ПОДШИВОК</StripTitle>
      <BookIcon />
    </PaletteStrip>
    <PaletteBody>
      <PaletteTools>
        <SelectBox>
          <SetSelect aria-label="Подшивка"><option>Новая ...</option></SetSelect>
          <SelectCaret><Caret $size={3} /></SelectCaret>
        </SelectBox>
        <IconButton $w={17} aria-label="Формирование комплекта"><EtransmitIcon /></IconButton>
        <IconButton $w={14} aria-label="Параметры комплекта"><Caret /></IconButton>
        <IconButton $w={17} aria-label="Публикация"><PublishIcon /></IconButton>
        <IconButton $w={14} aria-label="Параметры публикации"><Caret /></IconButton>
        <IconButton $w={17} aria-label="Наборы листов"><SelectionsIcon /></IconButton>
        <IconButton $w={12} aria-label="Параметры наборов"><Caret /></IconButton>
      </PaletteTools>
      <SheetsBox>
        <SheetsHeader>
          <SheetsTitle>Листы</SheetsTitle>
          <RefreshIcon />
          <Glyph w={5} h={5}><path d="M0 2.500h5" stroke="#eee" strokeWidth="1.500" /></Glyph>
        </SheetsHeader>
        <Tree>
          {tree.map((n) => (
            <TreeRow key={n.label} $level={n.level} $last={n.last}>
              {n.toggle && (
                <Expander aria-label={n.toggle === '+' ? 'Развернуть' : 'Свернуть'}>
                  <Glyph w={5} h={5}>
                    <path d={n.toggle === '+' ? 'M0 2.500h5M2.500 0v5' : 'M0 2.500h5'} stroke="#224488" />
                  </Glyph>
                </Expander>
              )}
              {n.level === 0 ? <SetIcon /> : n.level === 1 ? <SubsetIcon /> : <SheetIcon />}
              <TreeLabel $selected={n.selected}>{n.label}</TreeLabel>
            </TreeRow>
          ))}
        </Tree>
      </SheetsBox>
    </PaletteBody>
    <SideTabs>
      <SideTab $h={99} $active><Vertical>Список листов</Vertical></SideTab>
      <SideTab $h={96}><Vertical>Виды на листе</Vertical></SideTab>
      <SideTab $h={96}><Vertical>Виды моделей</Vertical></SideTab>
    </SideTabs>
  </Palette>
);

const Model = () => (
  <Drawing aria-hidden="true">
    <defs>
      <pattern id="grid" x="29.500" y="38.500" width="39.200" height="39.100" patternUnits="userSpaceOnUse">
        <path d="M7.840 0v39.100M15.680 0v39.100M23.520 0v39.100M31.360 0v39.100M0 7.820h39.200M0 15.640h39.200M0 23.460h39.200M0 31.280h39.200" stroke="#0d0f12" />
        <path d="M.5 0v39.100M0 .5h39.200" stroke="#1e212a" />
      </pattern>
    </defs>
    <rect width="100%" height="100%" fill="url(#grid)" />
    <path d="M106 428.500H420" stroke="#5c0f12" />
    <g stroke="#d8d8d8" strokeWidth="1.100">
      <circle cx="420.300" cy="118.300" r="77.300" />
      <circle cx="419.200" cy="309.800" r="64.200" />
      <path d="M441.500 192v59M365 171C377 181 382.500 194 382.500 211V247C382.500 257 378 261 374 264.500" />
      <path d="M422.500 78.500v77M383.500 117.500h77.500" />
      <path d="M12.500 409v9.500h40" stroke="#ccc" />
      <path d="M8.500 414.500h8v8h-8zM56 408.500l10 9M66 408.500l-10 9" />
    </g>
    <rect x="371" y="69" width="331.500" height="96" rx="9" stroke="#f00" strokeWidth="4" />
  </Drawing>
);

const statusCells = (cells: [string, boolean?][]) =>
  cells.map(([kind, on], i) =>
    kind === 'caret' ? (
      <StatusButton key={i} $w={13} aria-label="Параметры"><Caret $size={3} /></StatusButton>
    ) : (
      <StatusButton key={i} $on={on} $w={kind === 'iso' ? 16 : 18} aria-label={kind}><StatusIcon kind={kind} /></StatusButton>
    ),
  );

export default function App() {
  return (
    <Desktop>
      <GlobalStyle />
      <Window>
        <TitleArea />
        <RibbonArea />
        <Workspace>
          <FileTabs>
            <AddFileTab aria-label="Новый чертеж"><PlusIcon /></AddFileTab>
          </FileTabs>
          <Canvas>
            <Model />
            <Prompt>
              <PromptText htmlFor="base-y">Укажите базовую точку вставки:</PromptText>
              <CoordBox><Selected>20.0278</Selected></CoordBox>
              <CoordInput id="base-y" defaultValue="19.9418" />
            </Prompt>
            <ViewCube>
              <Ring />
              <Side $area="1 / 2">С</Side>
              <Side $area="2 / 1">З</Side>
              <CubeFace>Сверху</CubeFace>
              <Side $area="2 / 3">В</Side>
              <Side $area="3 / 2">Ю</Side>
            </ViewCube>
            <UcsButton>МСК <Caret /></UcsButton>
            <NavBar><NavDrawing /></NavBar>
            <CommandArea>
              <History>Команда: _block найдено: 6</History>
              <CommandLine>
                <CommandGrip>
                  <GripIcon />
                  <CloseIcon size={8} />
                  <WrenchIcon />
                </CommandGrip>
                <CommandPrompt>
                  <ConsoleIcon />
                  <Caret $dark />
                  <b>БЛОК</b>
                  <CommandInput defaultValue="Укажите базовую точку вставки: Укажите базовую точку вставки:" />
                  <Caret $dark $up $size={3} />
                </CommandPrompt>
              </CommandLine>
            </CommandArea>
          </Canvas>
          <SheetPalette />
        </Workspace>
        <StatusBar>
          <LayoutTabs>
            <LayoutTab $w={60} $active>Модель</LayoutTab>
            <LayoutTab $w={47}>Лист1</LayoutTab>
            <LayoutTab $w={47}>Лист2</LayoutTab>
            <LayoutTab $w={47}>Лист3</LayoutTab>
            <AddLayout aria-label="Новый лист"><PlusIcon /></AddLayout>
          </LayoutTabs>
          <StatusGroups>
            <StatusGroup $w={122}><Coordinates>20.0278, 19.9418, 0.0000</Coordinates></StatusGroup>
            <StatusGroup $w={46}><SpaceButton>МОДЕЛЬ</SpaceButton></StatusGroup>
            <StatusGroup $w={52}>{statusCells([['grid', true], ['snap'], ['caret']])}</StatusGroup>
            <StatusGroup $w={153}>
              {statusCells([['ortho'], ['polar', true], ['caret'], ['iso'], ['caret'], ['track', true], ['osnap', true], ['caret'], ['weight']])}
            </StatusGroup>
            <StatusGroup $w={87}>
              {statusCells([['annoOn', true], ['annoAuto'], ['anno']])}
              <StatusButton $w={16}>1:1</StatusButton>
              <Caret $size={3} />
            </StatusGroup>
            <StatusGroup $w={32}>
              <StatusButton $w={16} aria-label="Рабочее пространство"><GearIcon size={13} /></StatusButton>
              <Caret $size={3} />
            </StatusGroup>
            <StatusGroup $w={21}>{statusCells([['plus']])}</StatusGroup>
            <StatusGroup $w={20}>{statusCells([['isolate']])}</StatusGroup>
            <StatusGroup $w={38}>{statusCells([['full'], ['menu']])}</StatusGroup>
          </StatusGroups>
        </StatusBar>
      </Window>
    </Desktop>
  );
}
